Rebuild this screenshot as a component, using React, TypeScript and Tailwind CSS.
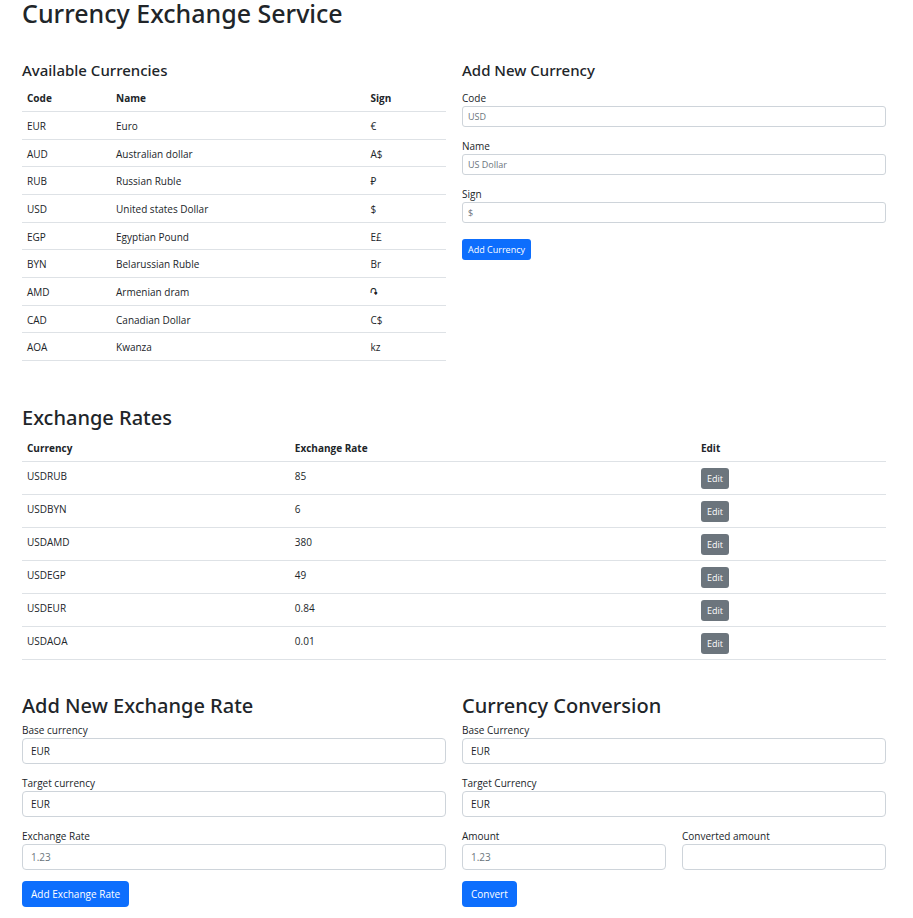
import type { ComponentProps, ReactNode } from "react";

const currencies = [
  { code: "EUR", name: "Euro", sign: "€" },
  { code: "AUD", name: "Australian dollar", sign: "A$" },
  { code: "RUB", name: "Russian Ruble", sign: "₽" },
  { code: "USD", name: "United states Dollar", sign: "$" },
  { code: "EGP", name: "Egyptian Pound", sign: "E£" },
  { code: "BYN", name: "Belarussian Ruble", sign: "Br" },
  { code: "AMD", name: "Armenian dram", sign: "֏" },
  { code: "CAD", name: "Canadian Dollar", sign: "C$" },
  { code: "AOA", name: "Kwanza", sign: "kz" },
];

const rates = [
  { pair: "USDRUB", rate: "85" },
  { pair: "USDBYN", rate: "6" },
  { pair: "USDAMD", rate: "380" },
  { pair: "USDEGP", rate: "49" },
  { pair: "USDEUR", rate: "0.84" },
  { pair: "USDAOA", rate: "0.01" },
];

function Cell({ children }: { children: ReactNode }) {
  return <td className="border-b border-[#dee2e6] px-[5px] pt-1.5 pb-1 align-top">{children}</td>;
}

function HeadCell({ children, width }: { children: ReactNode; width: string }) {
  return (
    <th scope="col" className={`${width} border-b border-[#dee2e6] px-[5px] pt-1.5 pb-[5px] text-left align-top font-bold`}>
      {children}
    </th>
  );
}

function SectionTitle({ children }: { children: ReactNode }) {
  return <h2 className="mb-1 font-['Noto_Sans',sans-serif] text-[20px] leading-6 font-medium">{children}</h2>;
}

function SmallField({ id, label, placeholder }: { id: string; label: string; placeholder: string }) {
  return (
    <div className="mb-[11px] flex flex-col">
      <label htmlFor={id}>{label}</label>
      <input
        id={id}
        type="text"
        placeholder={placeholder}
        className="h-[21px] w-full rounded-[3px] border border-[#ced4da] bg-white px-[5px] text-[9px] leading-4 placeholder:text-[#6c757d]"
      />
    </div>
  );
}

function Field({ id, label, placeholder }: { id: string; label: string; placeholder?: string }) {
  return (
    <div className="flex flex-col">
      <label htmlFor={id}>{label}</label>
      <input
        id={id}
        type="text"
        placeholder={placeholder}
        className="h-[26px] w-full rounded-sm border border-[#ced4da] bg-white px-2 placeholder:text-[#6c757d]"
      />
    </div>
  );
}

function CurrencySelect({ id, label }: { id: string; label: string }) {
  return (
    <div className="mb-[11px] flex flex-col">
      <label htmlFor={id}>{label}</label>
      <select
        id={id}
        defaultValue="EUR"
        className="h-[26px] w-full appearance-none rounded-sm border border-[#ced4da] bg-white px-2"
      >
        {currencies.map(({ code }) => (
          <option key={code} value={code}>
            {code}
          </option>
        ))}
      </select>
    </div>
  );
}

function PrimaryButton(props: ComponentProps<"button">) {
  return <button {...props} className="mt-[11px] h-[26px] rounded-sm bg-[#0d6efd] px-[9px] text-white" />;
}

export default function App() {
  return (
    <main className="bg-white pr-[27px] pl-[22px] font-['Open_Sans','Noto_Sans','DejaVu_Sans',sans-serif] text-[10px] leading-4 text-[#212529]">
      <h1 className="font-['Noto_Sans',sans-serif] text-[25px] leading-[26px] font-medium">Currency Exchange Service</h1>

      <div className="mt-[34px] grid grid-cols-2 gap-4">
        <section>
          <h2 className="mb-1 font-['Noto_Sans',sans-serif] text-[15px] leading-5 font-medium">Available Currencies</h2>
          <table className="h-[277px] w-full border-separate border-spacing-0">
            <thead>
              <tr>
                <HeadCell width="w-[21%]">Code</HeadCell>
                <HeadCell width="w-[60%]">Name</HeadCell>
                <HeadCell width="w-[19%]">Sign</HeadCell>
              </tr>
            </thead>
            <tbody>
              {currencies.map(({ code, name, sign }) => (
                <tr key={code}>
                  <Cell>{code}</Cell>
                  <Cell>{name}</Cell>
                  <Cell>{sign}</Cell>
                </tr>
              ))}
            </tbody>
          </table>
        </section>

        <section>
          <h2 className="mb-[10px] font-['Noto_Sans',sans-serif] text-[15px] leading-5 font-medium">Add New Currency</h2>
          <form onSubmit={(event) => event.preventDefault()}>
            <SmallField id="currency-code" label="Code" placeholder="USD" />
            <SmallField id="currency-name" label="Name" placeholder="US Dollar" />
            <SmallField id="currency-sign" label="Sign" placeholder="$" />
            <button className="mt-[5px] h-[21px] rounded-[3px] bg-[#0d6efd] px-1.5 text-[9px] text-white">
              Add Currency
            </button>
          </form>
        </section>
      </div>

      <section className="mt-[45px]">
        <SectionTitle>Exchange Rates</SectionTitle>
        <table className="w-full border-separate border-spacing-0">
          <thead>
            <tr>
              <HeadCell width="w-[31%]">Currency</HeadCell>
              <HeadCell width="w-[47%]">Exchange Rate</HeadCell>
              <HeadCell width="w-[22%]">Edit</HeadCell>
            </tr>
          </thead>
          <tbody>
            {rates.map(({ pair, rate }) => (
              <tr key={pair} className="h-[33px]">
                <Cell>{pair}</Cell>
                <Cell>{rate}</Cell>
                <Cell>
                  <button className="block h-[21px] rounded-[3px] bg-[#6c757d] px-1.5 text-[9px] text-white">Edit</button>
                </Cell>
              </tr>
            ))}
          </tbody>
        </table>
      </section>

      <div className="mt-[34px] grid grid-cols-2 gap-4">
        <section>
          <SectionTitle>Add New Exchange Rate</SectionTitle>
          <form onSubmit={(event) => event.preventDefault()}>
            <CurrencySelect id="rate-base" label="Base currency" />
            <CurrencySelect id="rate-target" label="Target currency" />
            <Field id="rate-value" label="Exchange Rate" placeholder="1.23" />
            <PrimaryButton>Add Exchange Rate</PrimaryButton>
          </form>
        </section>

        <section>
          <SectionTitle>Currency Conversion</SectionTitle>
          <form onSubmit={(event) => event.preventDefault()}>
            <CurrencySelect id="convert-base" label="Base Currency" />
            <CurrencySelect id="convert-target" label="Target Currency" />
            <div className="grid grid-cols-2 gap-4">
              <Field id="convert-amount" label="Amount" placeholder="1.23" />
              <Field id="convert-result" label="Converted amount" />
            </div>
            <PrimaryButton>Convert</PrimaryButton>
          </form>
        </section>
      </div>
    </main>
  );
}
